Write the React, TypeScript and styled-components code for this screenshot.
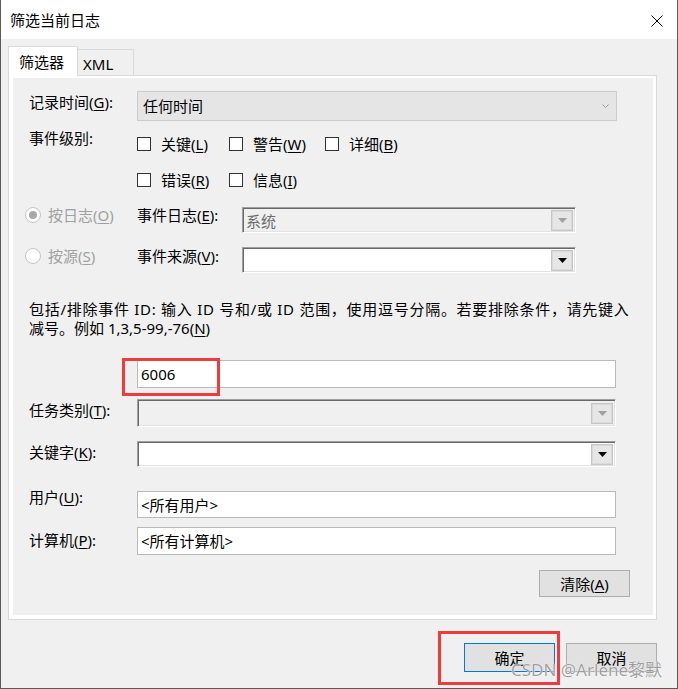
import React from "react";
import styled, { createGlobalStyle } from "styled-components";

const Global = createGlobalStyle`
  html, body { margin: 0; padding: 0; background: #ffffff; }
  body { font-family: "Noto Sans", "Noto Sans CJK SC", sans-serif; }
  * { box-sizing: border-box; }
`;

const Window = styled.div`
  position: relative;
  width: 678px;
  height: 689px;
  border: 1px solid #5a5a5a;
  border-top: none;
  background: #f0f0f0;
  display: flex;
  flex-direction: column;
  font-size: 15px;
  color: #000;
  overflow: hidden;
`;

const TitleBar = styled.div`
  height: 39px;
  flex-shrink: 0;
  background: #ffffff;
  display: flex;
  align-items: center;
  justify-content: space-between;
  padding: 0 14px 0 9px;
`;

const Title = styled.span`
  font-size: 15px;
  line-height: 20px;
  margin-top: 1px;
`;

const CloseIcon = styled.svg`
  width: 12px;
  height: 12px;
  margin-top: 3px;
`;

const Body = styled.div`
  display: flex;
  flex-direction: column;
  padding: 7px 20px 0 7px;
`;

const TabStrip = styled.div`
  display: flex;
  align-items: flex-end;
  margin-bottom: -1px;
`;

const Tab = styled.div<{ $active?: boolean }>`
  position: relative;
  z-index: ${(p) => (p.$active ? 2 : 0)};
  height: ${(p) => (p.$active ? 30 : 26)}px;
  width: ${(p) => (p.$active ? 70 : 56)}px;
  margin-bottom: ${(p) => (p.$active ? 0 : 1)}px;
  background: ${(p) => (p.$active ? "#ffffff" : "#f0f0f0")};
  border: 1px solid #d9d9d9;
  border-bottom: none;
  border-left: ${(p) => (p.$active ? "1px solid #d9d9d9" : "none")};
  padding: ${(p) => (p.$active ? "5px 0 0 10px" : "4px 0 0 5px")};
  line-height: 20px;
  font-size: 15px;
  white-space: nowrap;
`;

const Panel = styled.div`
  width: 649px;
  height: 545px;
  border: 1px solid #d9d9d9;
  background: #ffffff;
  padding: 2px 3px 4px 4px;
`;

const Page = styled.div`
  height: 100%;
  background: #f0f0f0;
  display: flex;
  flex-direction: column;
  padding: 13px 0 0 16px;
`;

const Row = styled.div<{ $mt?: number }>`
  display: flex;
  align-items: flex-start;
  margin-top: ${(p) => p.$mt ?? 0}px;
`;

const Label = styled.span<{ $mt?: number; $w?: number; $disabled?: boolean }>`
  width: ${(p) => p.$w ?? 108}px;
  flex-shrink: 0;
  line-height: 20px;
  margin-top: ${(p) => p.$mt ?? 0}px;
  white-space: nowrap;
  color: ${(p) => (p.$disabled ? "#a0a0a0" : "#000")};
`;

const Mn = styled.span`
  text-decoration: underline;
  text-underline-offset: 2px;
  text-decoration-thickness: 1px;
`;

const ModernSelect = styled.div`
  width: 480px;
  height: 30px;
  border: 1px solid #cccccc;
  background: #e5e5e5;
  display: flex;
  align-items: center;
  justify-content: space-between;
  padding: 0 7px 0 5px;
  line-height: 20px;
`;

const Chevron = styled.svg`
  width: 7px;
  height: 4px;
`;

const CheckGrid = styled.div`
  display: grid;
  grid-template-columns: 92px 96px auto;
  grid-auto-rows: 20px;
  row-gap: 16px;
  padding-top: 6px;
`;

const CheckItem = styled.label`
  display: flex;
  align-items: center;
  gap: 10px;
  line-height: 20px;
  white-space: nowrap;
`;

const CheckBox = styled.span`
  width: 14px;
  height: 14px;
  border: 1px solid #333333;
  background: #ffffff;
  flex-shrink: 0;
`;

const RadioItem = styled.label`
  width: 112px;
  margin-left: -4px;
  flex-shrink: 0;
  display: flex;
  align-items: center;
  gap: 7px;
  line-height: 20px;
  color: #a0a0a0;
  white-space: nowrap;
`;

const Radio = styled.span<{ $checked?: boolean }>`
  width: 16px;
  height: 16px;
  border-radius: 50%;
  border: 1px solid #c4c4c4;
  background: #ffffff;
  display: flex;
  align-items: center;
  justify-content: center;
  flex-shrink: 0;
  &::after {
    content: "";
    display: ${(p) => (p.$checked ? "block" : "none")};
    width: 8px;
    height: 8px;
    border-radius: 50%;
    background: #a8a8a8;
  }
`;

const OldCombo = styled.div<{ $w: number; $h: number; $mt?: number; $disabled?: boolean }>`
  width: ${(p) => p.$w}px;
  height: ${(p) => p.$h}px;
  margin-top: ${(p) => p.$mt ?? 0}px;
  border: 1px solid;
  border-color: #a0a0a0 #ffffff #ffffff #a0a0a0;
  box-shadow: inset 1px 1px 0 #696969, inset -1px -1px 0 #e3e3e3;
  background: ${(p) => (p.$disabled ? "#f0f0f0" : "#ffffff")};
  display: flex;
  align-items: center;
  justify-content: space-between;
  padding: 1px 2px 0 3px;
  flex-shrink: 0;
`;

const ComboText = styled.span`
  color: #6d6d6d;
  line-height: 20px;
`;

const DropBtn = styled.span`
  width: 22px;
  height: 21px;
  border: 1px solid #c6c6c6;
  background: #e6e6e6;
  box-shadow: inset 0 0 0 1px #dadada;
  display: flex;
  align-items: center;
  justify-content: center;
`;

const Description = styled.p<{ $mt?: number }>`
  margin: ${(p) => p.$mt ?? 0}px 0 0 0;
  line-height: 19px;
  white-space: nowrap;
`;

const WideLine = styled.span`
  letter-spacing: 0.72px;
`;

const InputWrap = styled.div<{ $mt?: number; $ml?: number }>`
  position: relative;
  margin-top: ${(p) => p.$mt ?? 0}px;
  margin-left: ${(p) => p.$ml ?? 0}px;
`;

const TextBox = styled.div<{ $h: number; $mt?: number }>`
  width: 479px;
  height: ${(p) => p.$h}px;
  margin-top: ${(p) => p.$mt ?? 0}px;
  border: 1px solid #b9b9b9;
  background: #ffffff;
  display: flex;
  align-items: center;
  padding-left: 3px;
  line-height: 20px;
  flex-shrink: 0;
`;

const Highlight = styled.span<{ $l: number; $t: number; $w: number; $h: number }>`
  position: absolute;
  left: ${(p) => p.$l}px;
  top: ${(p) => p.$t}px;
  width: ${(p) => p.$w}px;
  height: ${(p) => p.$h}px;
  border: 3px solid #ef3b3b;
  pointer-events: none;
`;

const PushButton = styled.button<{ $default?: boolean; $h?: number }>`
  width: 91px;
  height: ${(p) => p.$h ?? 29}px;
  border: 1px solid ${(p) => (p.$default ? "#0078d7" : "#adadad")};
  background: #e1e1e1;
  font-family: inherit;
  font-size: 15px;
  line-height: 20px;
  color: #000;
  padding: 0;
  white-space: nowrap;
`;

const ClearButton = styled(PushButton)`
  align-self: flex-end;
  margin-top: 15px;
  margin-right: 23px;
`;

const ButtonRow = styled.div`
  display: flex;
  justify-content: flex-end;
  gap: 11px;
  margin-top: 23px;
`;

const ButtonWrap = styled.div`
  position: relative;
`;

const Watermark = styled.span`
  position: absolute;
  left: 510px;
  top: 659px;
  font-size: 17px;
  line-height: 22px;
  color: rgba(120, 120, 120, 0.72);
  text-shadow: 0 0 1px #ffffff, 0 0 1px #ffffff;
  white-space: nowrap;
  pointer-events: none;
`;

const Triangle = ({ disabled }: { disabled?: boolean }) => (
  <svg width="9" height="5" viewBox="0 0 9 5">
    <polygon points="0,0 9,0 4.5,5" fill={disabled ? "#a0a0a0" : "#000"} />
  </svg>
);

export default function App() {
  return (
    <>
      <Global />
      <Window>
        <TitleBar>
          <Title>筛选当前日志</Title>
          <CloseIcon viewBox="0 0 12 12">
            <line x1="0.5" y1="0.5" x2="11.5" y2="11.5" stroke="#000" strokeWidth="1" />
            <line x1="11.5" y1="0.5" x2="0.5" y2="11.5" stroke="#000" strokeWidth="1" />
          </CloseIcon>
        </TitleBar>
        <Body>
          <TabStrip>
            <Tab $active>筛选器</Tab>
            <Tab>XML</Tab>
          </TabStrip>
          <Panel>
            <Page>
              <Row>
                <Label $mt={1}>
                  记录时间(<Mn>G</Mn>):
                </Label>
                <ModernSelect>
                  <span>任何时间</span>
                  <Chevron viewBox="0 0 7 4">
                    <polyline points="0.5,0.5 3.5,3.5 6.5,0.5" fill="none" stroke="#9a9a9a" strokeWidth="1" />
                  </Chevron>
                </ModernSelect>
              </Row>
              <Row $mt={7}>
                <Label>事件级别:</Label>
                <CheckGrid>
                  <CheckItem>
                    <CheckBox />
                    <span>
                      关键(<Mn>L</Mn>)
                    </span>
                  </CheckItem>
                  <CheckItem>
                    <CheckBox />
                    <span>
                      警告(<Mn>W</Mn>)
                    </span>
                  </CheckItem>
                  <CheckItem>
                    <CheckBox />
                    <span>
                      详细(<Mn>B</Mn>)
                    </span>
                  </CheckItem>
                  <CheckItem>
                    <CheckBox />
                    <span>
                      错误(<Mn>R</Mn>)
                    </span>
                  </CheckItem>
                  <CheckItem>
                    <CheckBox />
                    <span>
                      信息(<Mn>I</Mn>)
                    </span>
                  </CheckItem>
                </CheckGrid>
              </Row>
              <Row $mt={15}>
                <RadioItem>
                  <Radio $checked />
                  <span>
                    按日志(<Mn>O</Mn>)
                  </span>
                </RadioItem>
                <Label $w={105}>
                  事件日志(<Mn>E</Mn>):
                </Label>
                <OldCombo $w={334} $h={26} $mt={2} $disabled>
                  <ComboText>系统</ComboText>
                  <DropBtn>
                    <Triangle disabled />
                  </DropBtn>
                </OldCombo>
              </Row>
              <Row $mt={13}>
                <RadioItem>
                  <Radio />
                  <span>
                    按源(<Mn>S</Mn>)
                  </span>
                </RadioItem>
                <Label $w={105}>
                  事件来源(<Mn>V</Mn>):
                </Label>
                <OldCombo $w={334} $h={26} $mt={1}>
                  <span />
                  <DropBtn>
                    <Triangle />
                  </DropBtn>
                </OldCombo>
              </Row>
              <Description $mt={27}>
                <WideLine>
                  包括/排除事件 ID: 输入 ID 号和/或 ID 范围，使用逗号分隔。若要排除条件，请先键入
                </WideLine>
                <br />
                减号。例如 1,3,5-99,-76(<Mn>N</Mn>)
              </Description>
              <InputWrap $mt={22} $ml={108}>
                <TextBox $h={28}>6006</TextBox>
                <Highlight $l={-15} $t={-2} $w={98} $h={38} />
              </InputWrap>
              <Row $mt={11}>
                <Label $mt={1}>
                  任务类别(<Mn>T</Mn>):
                </Label>
                <OldCombo $w={479} $h={28} $disabled>
                  <span />
                  <DropBtn>
                    <Triangle disabled />
                  </DropBtn>
                </OldCombo>
              </Row>
              <Row $mt={14}>
                <Label $mt={1}>
                  关键字(<Mn>K</Mn>):
                </Label>
                <OldCombo $w={479} $h={26}>
                  <span />
                  <DropBtn>
                    <Triangle />
                  </DropBtn>
                </OldCombo>
              </Row>
              <Row $mt={20}>
                <Label>
                  用户(<Mn>U</Mn>):
                </Label>
                <TextBox $h={27} $mt={4}>
                  {"<所有用户>"}
                </TextBox>
              </Row>
              <Row $mt={9}>
                <Label $mt={3}>
                  计算机(<Mn>P</Mn>):
                </Label>
                <TextBox $h={28}>{"<所有计算机>"}</TextBox>
              </Row>
              <ClearButton $h={27}>
                清除(<Mn>A</Mn>)
              </ClearButton>
            </Page>
          </Panel>
          <ButtonRow>
            <ButtonWrap>
              <PushButton $default>确定</PushButton>
              <Highlight $l={-26} $t={-12} $w={122} $h={54} />
            </ButtonWrap>
            <PushButton>取消</PushButton>
          </ButtonRow>
        </Body>
        <Watermark>CSDN @Arlene黎默</Watermark>
      </Window>
    </>
  );
}
